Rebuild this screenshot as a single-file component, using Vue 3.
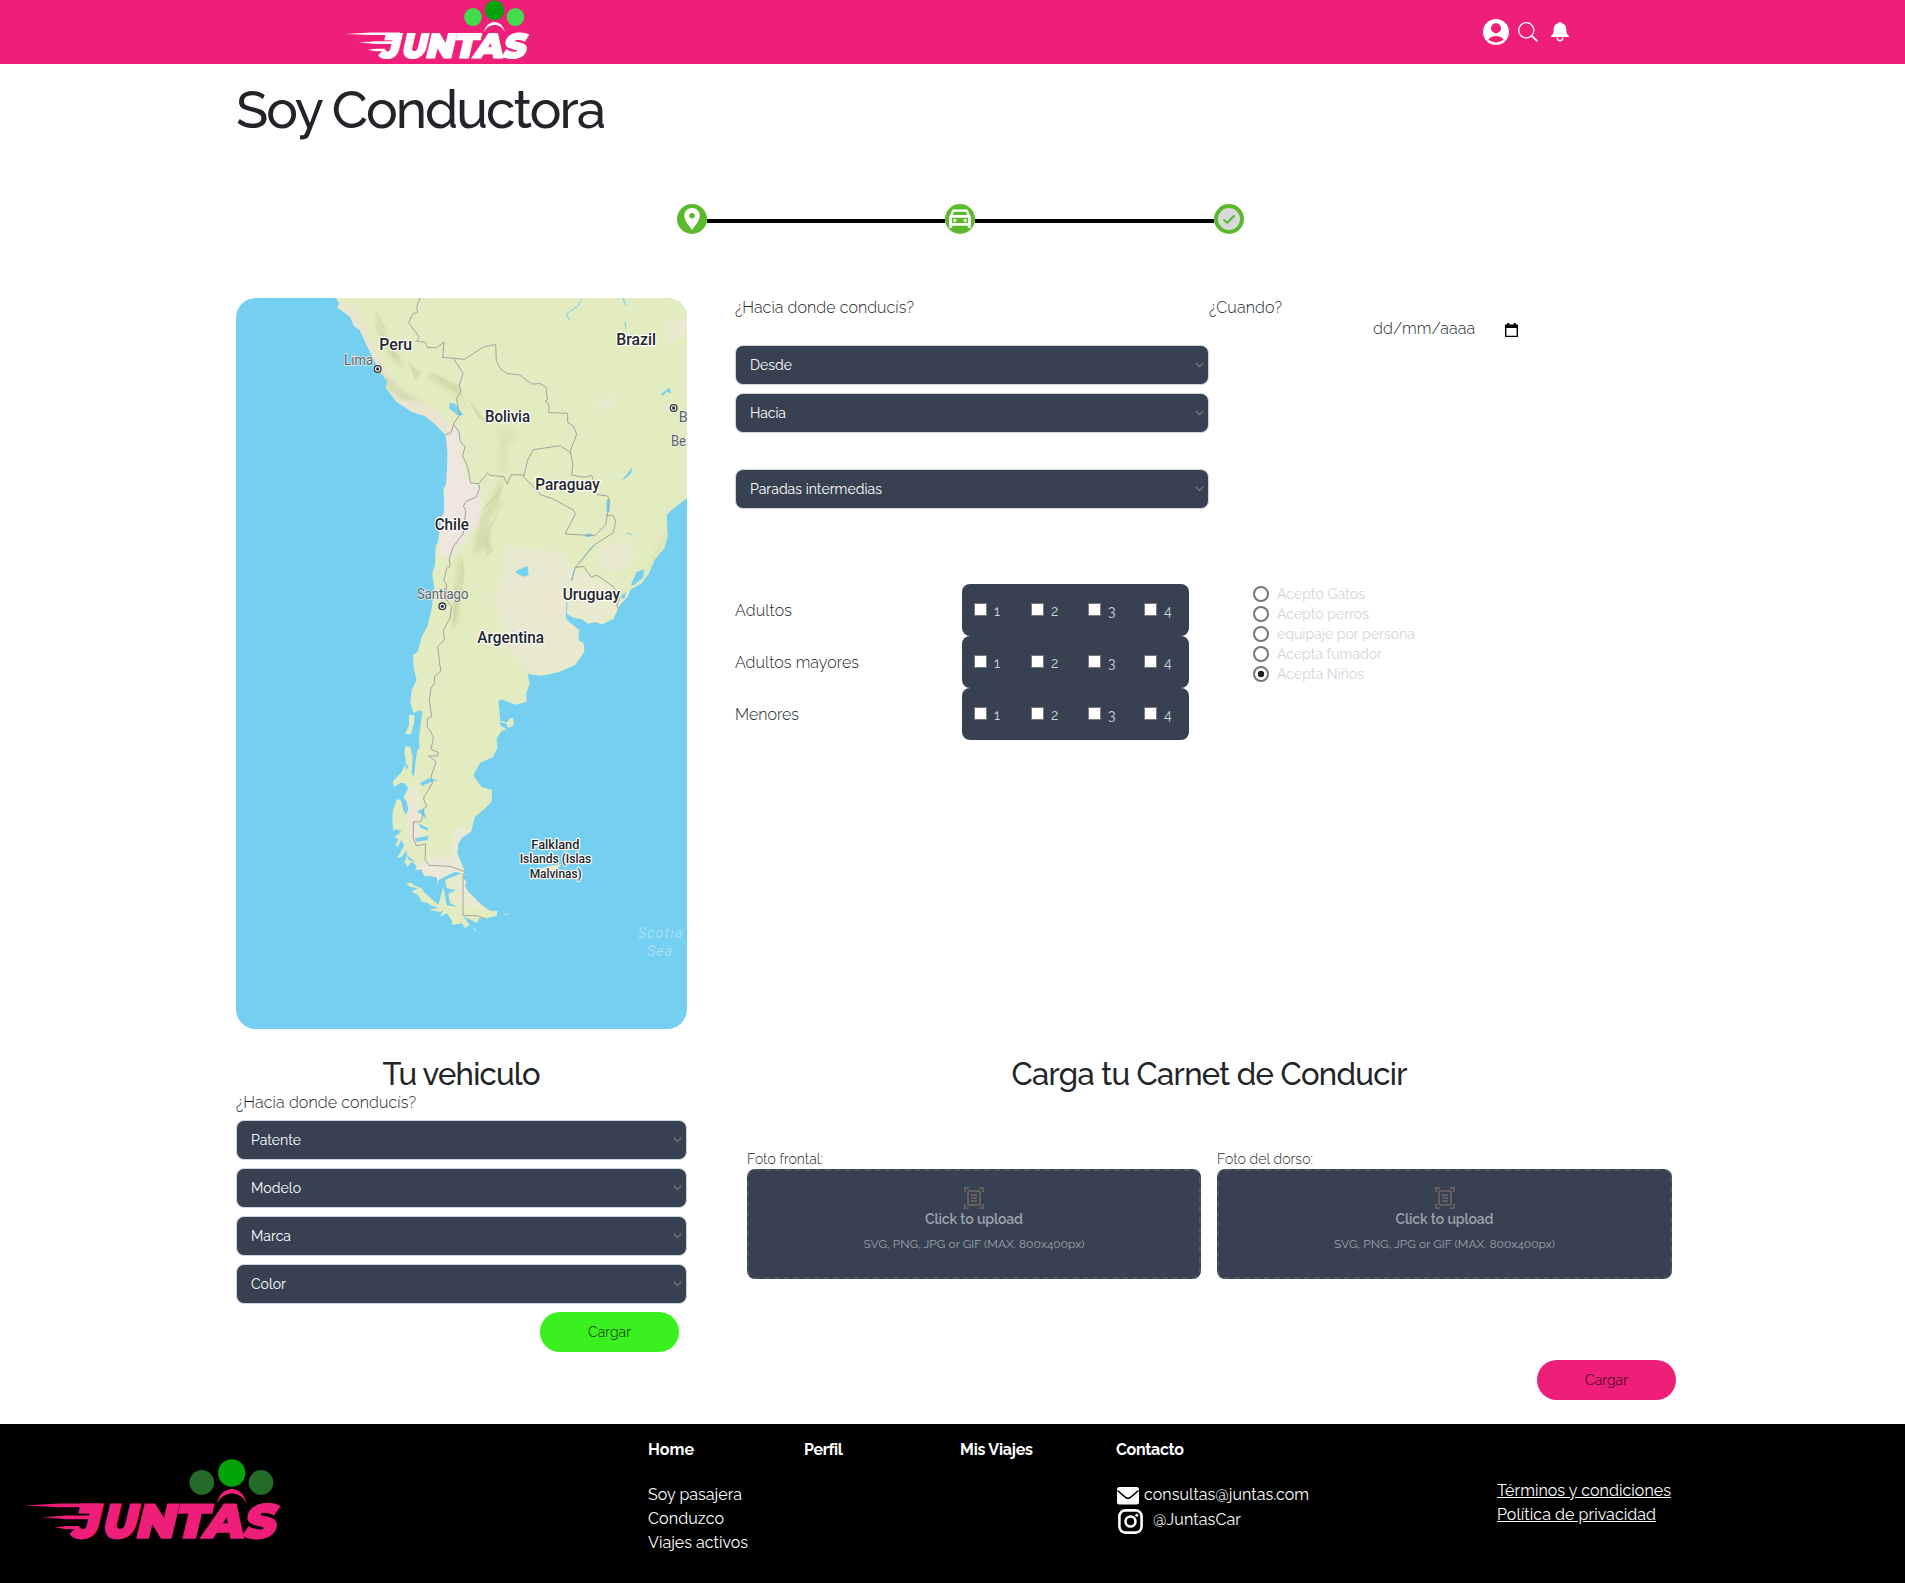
<script setup>
import { h } from 'vue'

// Adjusts tracking so a label keeps its design width.
const vFit = {
  mounted(el, { value }) {
    const natural = el.getBoundingClientRect().width
    const gaps = el.textContent.trim().length - 1
    const step = (value - natural) / gaps
    el.style.letterSpacing = step + 'px'
    el.style.marginRight = -step + 'px'
  },
}

const letters = [
  ['J', 213, 81], ['U', 302, 104], ['N', 404, 119], ['T', 519, 101], ['A', 606, 123], ['S', 727, 97],
]

const Logo = (props) =>
  h('svg', { viewBox: '70 118 772 242', preserveAspectRatio: 'none' }, [
    h('circle', { cx: 607, cy: 188, r: 37, fill: props.side }),
    h('circle', { cx: 785, cy: 188, r: 37, fill: props.side }),
    h('circle', { cx: 697, cy: 160, r: 41, fill: '#05a30b' }),
    h('path', { d: 'M653 250C664 194 730 194 741 250C722 211 674 211 653 250Z', fill: props.ink }),
    h('path', { d: 'M72 257L180 251H300V262H180ZM127 292L200 287H275V298H200ZM166 322L200 318H238V328H200Z', fill: props.ink }),
    ...letters.map(([c, x, w]) =>
      h('text', {
        transform: `translate(${x} 354) skewX(-13.5)`, textLength: w, lengthAdjust: 'spacingAndGlyphs',
        fill: props.ink, stroke: props.ink, 'stroke-width': 4, 'font-family': 'Montserrat, Raleway, sans-serif',
        'font-weight': 900, 'font-size': 144,
      }, c)),
  ])
Logo.props = ['ink', 'side']

const routes = [['Desde', 42], ['Hacia', 36], ['Paradas intermedias', 132]]
const vehicle = [['Patente', 50], ['Modelo', 50], ['Marca', 40], ['Color', 35]]
const passengers = [['Adultos', 57], ['Adultos mayores', 124], ['Menores', 64]]
const options = [
  ['Acepto Gatos', 88], ['Acepto perros', 92], ['equipaje por persona', 138],
  ['Acepta fumador', 105], ['Acepta Niños', 87],
]
const uploads = [['Foto frontal:', 76], ['Foto del dorso:', 96]]
const countries = [
  ['Peru', 463, 181, 98], ['Brazil', 1174, 165, 119], ['Bolivia', 780, 397, 135],
  ['Paraguay', 931, 600, 193], ['Chile', 629, 719, 103], ['Uruguay', 1013, 930, 172],
  ['Argentina', 757, 1058, 200],
]
</script>

<template>
  <div class="page">
    <header class="topbar">
      <Logo class="top-logo" ink="#fff" side="#44dc4c" />
      <nav class="actions">
        <svg width="26" height="26" viewBox="0 0 26 26"><circle cx="13" cy="13" r="13" fill="#fff" /><circle cx="13" cy="9.2" r="5" fill="#ee1e79" /><path d="M5.4 20.6C8.5 15.7 17.5 15.7 20.6 20.6C16.5 24.3 9.5 24.3 5.4 20.6Z" fill="#ee1e79" /></svg>
        <svg width="20" height="20" viewBox="0 0 20 20" fill="none" stroke="#fff" stroke-width="1.3"><circle cx="8.3" cy="8.3" r="7.6" /><path d="M13.8 13.8L19.4 19.4" stroke-width="1.8" /></svg>
        <svg width="18" height="20" viewBox="0 0 18 20" fill="#fff"><path d="M9 0C10 0 10.5.6 10.5 1.3C14 2 15.3 4.5 15.3 8C15.3 11.5 16.5 12.5 18 14V15H0V14C1.5 12.5 2.7 11.5 2.7 8C2.7 4.5 4 2 7.5 1.3C7.5.6 8 0 9 0Z" /><path d="M6.2 15.5C6.5 19.8 11.5 19.8 11.8 15.5" fill="none" stroke="#fff" stroke-width="1.4" /></svg>
      </nav>
    </header>

    <main>
      <h1><span v-fit="370">Soy Conductora</span></h1>

      <div class="stepper">
        <svg class="step" viewBox="0 0 30 30"><circle cx="15" cy="15" r="15" fill="#5bba2b" /><path d="M15 4C10.5 4 7.3 7.3 7.3 11.6C7.3 16.5 11 20.5 15 26C19 20.5 22.7 16.5 22.7 11.6C22.7 7.3 19.5 4 15 4Z" fill="#fff" /><circle cx="15" cy="11.7" r="2.7" fill="#5bba2b" /></svg>
        <i class="track first"></i>
        <svg class="step" viewBox="0 0 30 30"><circle cx="15" cy="15" r="15" fill="#5bba2b" /><path d="M7.5 5.5H22.5L25.8 13V24H22.8V21.7H7.2V24H4.2V13Z" fill="#fff" /><path d="M9 7.8H21L22.3 11H7.7ZM7 13.700H23V19H7Z" fill="#5bba2b" /><circle cx="9.7" cy="16.4" r="1.7" fill="#fff" /><circle cx="20.3" cy="16.4" r="1.7" fill="#fff" /></svg>
        <i class="track"></i>
        <svg class="step" viewBox="0 0 30 30"><circle cx="15" cy="15" r="15" fill="#5bba2b" /><circle cx="15" cy="15" r="11" fill="#d9d9d9" /><path d="M9.5 15.5L13.2 18.8L20.5 11.5" fill="none" stroke="#5bba2b" stroke-width="2" /></svg>
      </div>

      <section class="trip">
        <svg class="map" viewBox="33 24 1353 2193">
          <defs>
            <clipPath id="land">
              <path d="M332 24L343 40L336 52L375 80L387 108L404 120L425 165L445 205L462 240L487 275L482 294L515 335L560 365L600 378L630 402L662 435L668 490L664 580L656 600L658 665L645 690L640 755L632 768L630 825L622 850L628 900L618 965L607 1010L590 1040L578 1085L564 1095L566 1135L575 1170L560 1200L556 1240L566 1270L583 1260L592 1270L580 1325L584 1375L572 1385L570 1435L566 1460L560 1450L563 1400L556 1370L542 1368L538 1390L543 1410L538 1430L530 1445L503 1475L508 1490L528 1478L538 1480L550 1495L535 1522L545 1535L550 1560L540 1575L534 1545L526 1530L515 1528L512 1540L504 1560L502 1590L505 1622L515 1617L530 1625L508 1640L520 1648L512 1665L518 1672L528 1650L538 1665L525 1690L515 1705L530 1700L545 1680L545 1700L538 1715L548 1730L560 1715L575 1728L570 1740L590 1738L598 1760L610 1758L635 1762L642 1800L638 1822L615 1818L600 1808L590 1795L565 1785L560 1778L545 1780L532 1770L555 1790L578 1795L560 1805L580 1815L590 1835L608 1838L615 1845L640 1853L612 1860L645 1866L655 1860L645 1880L665 1870L680 1890L682 1905L712 1900L718 1915L735 1905L715 1880L740 1890L755 1900L762 1885L785 1885L815 1877L818 1862L795 1862L770 1845L750 1825L732 1808L720 1790L724 1775L715 1765L720 1745L697 1690L700 1660L712 1642L738 1625L750 1580L775 1560L800 1535L801 1500L770 1492L745 1456L765 1418L803 1402L817 1375L815 1345L830 1322L845 1318L826 1306L824 1290L845 1298L855 1285L865 1285L866 1306L850 1314L845 1302L826 1295L820 1232L830 1228L870 1244L905 1235L904 1210L914 1180L908 1152L950 1157L1000 1147L1050 1125L1078 1085L1076 1060L1060 1050L1063 1020L1024 990L1025 970L1045 983L1070 987L1090 1001L1110 996L1132 1003L1165 988L1184 945L1205 925L1218 898L1250 880L1272 850L1290 808L1318 775L1328 738L1325 675L1340 660L1386 624V24Z" />
            </clipPath>
            <filter id="soft"><feGaussianBlur stdDeviation="7" /></filter>
          </defs>
          <rect x="33" y="24" width="1353" height="2193" fill="#75cff0" />
          <g clip-path="url(#land)">
            <rect x="33" y="24" width="1353" height="2193" fill="#e3ecc0" />
            <g filter="url(#soft)">
              <path d="M325 24L400 60L450 180L520 290L620 350L690 410L660 450L540 370L450 250L350 60Z" fill="#e9e4d0" />
              <path d="M482 285L540 355L670 440L700 400L720 560L770 590L765 700L700 770L690 800L640 800L650 430L520 355Z" fill="#efe6df" />
              <path d="M850 770L1020 790L1050 850L1020 930L1050 1020L1080 1080L1040 1130L930 1160L850 1080L810 930Z" fill="#e9e9d2" />
              <path d="M1120 770L1210 750L1230 810L1160 850L1120 820ZM1050 840L1160 880L1190 950L1130 1000L1020 980ZM1320 100L1390 80V130L1330 160ZM1120 330L1170 320L1160 350L1110 360Z" fill="#e9ead0" />
              <path d="M690 1610L740 1620L700 1680L720 1790L790 1860L700 1840L570 1730L620 1700L680 1700ZM550 1480L580 1480L590 1660L550 1650Z" fill="#ebe9d6" />
              <path d="M552 1550L575 1550L570 1660L550 1640Z" fill="#eee3df" />
              <path d="M450 50L475 125L520 190L540 240L495 200L455 120ZM610 245L690 290L740 370L700 320L620 270ZM830 560L820 650L760 730L800 690L790 770L740 800L760 700L800 620ZM700 780L715 850L700 1000L680 1010L690 900ZM375 120L440 220L530 300L600 340L520 325L430 240Z" fill="#d2dba9" opacity=".85" />
              <path d="M1380 640L1310 780L1240 880L1310 740ZM800 420L870 415L875 450L850 470L850 550L820 550L825 450Z" fill="#d9e1b4" opacity=".7" />
            </g>
            <path d="M450 65L487 120L470 112ZM490 160L525 210L505 205ZM550 215L590 250L570 270ZM620 248L700 285L720 330ZM725 320L790 400L760 385ZM835 570L830 610L770 665L785 640L815 615ZM840 625L805 700L780 735L800 700ZM780 730L805 780L785 800ZM710 790L718 850L708 920ZM690 880L700 960L682 1020Z" fill="#cbd3a2" opacity=".55" />
          </g>
          <path fill="#e6ebc7" d="M552 1274L568 1276L568 1295L558 1333L541 1332L552 1305ZM532 1874L550 1876ZM664 1760L710 1750L695 1800L720 1805L700 1830L668 1815ZM745 1912L760 1930L748 1920ZM835 1874L858 1868L842 1876ZM945 1735L975 1728L1010 1722L985 1745L955 1745Z" />
          <path fill="#75cff0" d="M570 1275L592 1262L580 1360L567 1440ZM540 1415L550 1430L543 1440ZM528 1530L545 1570L535 1560ZM580 1600L610 1615L608 1622L585 1612ZM570 1645L610 1638L608 1650L575 1655ZM575 1565L595 1555L605 1590L594 1575ZM585 1480L610 1465L638 1470L620 1475L590 1488ZM545 1695L570 1715L552 1710ZM640 1770L690 1745L710 1750L660 1770L665 1795L692 1800L670 1812L675 1840L700 1852L665 1845L655 1790L640 1845L590 1800L636 1820ZM560 1760L625 1758L600 1770L628 1770L600 1785ZM675 338L690 342L715 375L700 377L672 355ZM873 842L908 828L911 855L893 860L873 848ZM1217 885L1235 845L1257 838L1255 862L1228 885ZM1185 920L1203 905L1198 928ZM1190 570L1208 550L1222 530L1218 550L1200 566ZM1075 738L1090 730L1105 733L1092 742ZM1145 628H1154V665H1144ZM1308 312L1333 293L1340 310L1325 305L1312 318ZM638 695L650 704L640 708Z" />
          <path fill="none" stroke="#75cff0" stroke-width="3" d="M1070 28L1058 48L1024 72L1034 92M1193 24L1204 48M1200 96L1202 115M1050 835L1040 870M1026 935L1023 985M1105 765L1060 822M1205 730L1223 734" />
          <g fill="none" stroke="#a3a39f" stroke-width="3">
            <path d="M585 24L575 50L578 65L562 74L551 98L583 142L574 154L601 157L607 173H635L657 155L653 202L718 208L775 171L812 163L814 212L825 235L845 250L884 255L920 282L945 281L963 291L967 330L960 334L972 343V368L1028 370V397L1045 408L1055 433L1035 485L1044 522L1040 555L1078 562L1100 556L1117 614L1148 618L1154 635L1142 705L1109 737L1020 732L1051 672L1045 660L980 625L948 615L896 560L908 510L925 479L1005 467L1040 490" />
            <path d="M685 204L714 250L703 285L708 305L694 325L704 375L685 402L702 425L706 455L720 470L713 498L728 530L737 579L761 581L788 549L795 556L836 560L847 582L858 554L896 555M662 434L678 428L685 404M761 581L764 595L753 622L725 633L715 648L722 662L715 730L685 770L673 805L675 830L665 835L656 872L665 885L662 925L680 950L675 985L655 1020L658 1050L638 1070L647 1143L629 1158L628 1180L618 1195L613 1230L620 1280L607 1287V1312L618 1325L625 1345L618 1378L640 1387L636 1398H611L633 1415L618 1460L622 1480L595 1525L605 1550L595 1557L590 1592L580 1596H565V1645L575 1668L602 1662L600 1710L612 1726L675 1729L720 1745L714 1755V1877H755L782 1886M1142 677H1165L1172 695L1165 728L1108 765L1050 833L1040 872M1050 833L1075 829L1100 862L1115 855L1165 890L1185 925L1175 945L1182 960" />
          </g>
          <g font-family="Roboto, sans-serif" font-weight="500" font-size="48" fill="#22252b" stroke="#fff" stroke-width="7" stroke-linejoin="round" paint-order="stroke">
            <text v-for="c in countries" :key="c[0]" :x="c[1]" :y="c[2]" :textLength="c[3]" lengthAdjust="spacingAndGlyphs">{{ c[0] }}</text>
            <g font-size="38">
              <text x="919" y="1678" textLength="144" lengthAdjust="spacingAndGlyphs">Falkland</text>
              <text x="884" y="1720" textLength="215" lengthAdjust="spacingAndGlyphs">Islands (Islas</text>
              <text x="914" y="1763" textLength="156" lengthAdjust="spacingAndGlyphs">Malvinas)</text>
            </g>
          </g>
          <g font-family="Roboto, sans-serif" font-size="43" fill="#5b626a" stroke="#f4f4ee" stroke-width="4" paint-order="stroke">
            <text x="357" y="225" textLength="88" lengthAdjust="spacingAndGlyphs">Lima</text>
            <text x="576" y="928" textLength="154" lengthAdjust="spacingAndGlyphs">Santiago</text>
            <text x="1361" y="396">B</text>
            <text x="1338" y="468" textLength="45" lengthAdjust="spacingAndGlyphs">Be</text>
          </g>
          <g font-family="Roboto, sans-serif" font-size="43" font-style="italic" fill="#a6def5">
            <text x="1238" y="1944" textLength="134">Scotia</text>
            <text x="1266" y="1998" textLength="76">Sea</text>
          </g>
          <g v-for="p in [[458, 237], [652, 949], [1346, 354]]" :key="p[0]" :transform="`translate(${p[0]} ${p[1]})`">
            <circle r="13" fill="#fff" /><circle r="10" fill="none" stroke="#30343a" stroke-width="4" /><circle r="5" fill="#30343a" />
          </g>
        </svg>

        <div class="route">
          <p><span v-fit="179">¿Hacia donde conducís?</span></p>
          <div class="selects">
            <div v-for="r in routes" :key="r[0]" class="select">
              <span v-fit="r[1]">{{ r[0] }}</span>
              <svg width="9" height="6" viewBox="0 0 9 6"><path d="M.8 .8L4.5 4.5L8.2 .8" /></svg>
            </div>
          </div>
          <div class="seats">
            <div v-for="p in passengers" :key="p[0]" class="seat-row">
              <span class="seat-name"><span v-fit="p[1]">{{ p[0] }}</span></span>
              <div class="seat-box">
                <label v-for="n in 4" :key="n"><i class="check"></i><span class="num">{{ n }}</span></label>
              </div>
            </div>
          </div>
        </div>

        <div class="when">
          <p><span v-fit="73">¿Cuando?</span></p>
          <div class="date">
            <span v-fit="102">dd/mm/aaaa</span>
            <svg width="13" height="14" viewBox="0 0 12 14" preserveAspectRatio="none"><path d="M2 0H4V1.5H8V0H10V1.5H12V14H0V1.5H2ZM1.3 5V12.7H10.7V5Z" fill="#000" fill-rule="evenodd" /></svg>
          </div>
          <ul>
            <li v-for="(o, i) in options" :key="o[0]"><i class="radio" :class="{ on: i === 4 }"></i><span v-fit="o[1]">{{ o[0] }}</span></li>
          </ul>
        </div>
      </section>

      <section class="bottom">
        <div class="vehicle">
          <h2><span v-fit="158">Tu vehiculo</span></h2>
          <p><span v-fit="180">¿Hacia donde conducís?</span></p>
          <div v-for="r in vehicle" :key="r[0]" class="select">
            <span v-fit="r[1]">{{ r[0] }}</span>
            <svg width="9" height="6" viewBox="0 0 9 6"><path d="M.8 .8L4.5 4.5L8.2 .8" /></svg>
          </div>
          <button class="green"><span v-fit="43">Cargar</span></button>
        </div>
        <div class="licence">
          <h2><span v-fit="396">Carga tu Carnet de Conducir</span></h2>
          <div class="uploads">
            <div v-for="u in uploads" :key="u[0]" class="upload">
              <p><span v-fit="u[1]">{{ u[0] }}</span></p>
              <div class="drop">
                <svg width="20" height="22" viewBox="0 0 20 22" fill="none" stroke="#635f5f" stroke-width="2"><path d="M1 5V1H5M15 1H19V5M19 17V21H15M5 21H1V17M7 8H13M7 11H13M7 14H13" /><rect x="4" y="4" width="12" height="14" rx="1" /></svg>
                <b><span v-fit="98">Click to upload</span></b>
                <small><span v-fit="221">SVG, PNG, JPG or GIF (MAX. 800x400px)</span></small>
              </div>
            </div>
          </div>
          <button class="pink"><span v-fit="43">Cargar</span></button>
        </div>
      </section>
    </main>

    <footer>
      <Logo class="foot-logo" ink="#ee1e79" side="#246b27" />
      <div class="col">
        <h3><span v-fit="46">Home</span></h3>
        <a><span v-fit="94">Soy pasajera</span></a>
        <a><span v-fit="76">Conduzco</span></a>
        <a><span v-fit="100">Viajes activos</span></a>
      </div>
      <div class="col"><h3><span v-fit="38">Perfil</span></h3></div>
      <div class="col"><h3><span v-fit="73">Mis Viajes</span></h3></div>
      <div class="col contact">
        <h3><span v-fit="68">Contacto</span></h3>
        <a class="mail"><svg width="22" height="18" viewBox="0 0 22 18"><rect width="22" height="17.5" rx="2.5" fill="#fff" /><path d="M.5 3.5L8.5 10.3C10 11.5 12 11.5 13.5 10.3L21.5 3.5" fill="none" stroke="#000" stroke-width="1.5" /></svg><span v-fit="165">consultas@juntas.com</span></a>
        <a class="insta"><svg width="25" height="25" viewBox="0 0 25 25" fill="none" stroke="#fff" stroke-width="2.6"><rect x="1.4" y="1.4" width="22.2" height="22.2" rx="6" /><circle cx="12.5" cy="12.5" r="5" /><circle cx="18.8" cy="6.3" r="1.5" fill="#fff" stroke="none" /></svg><span v-fit="88">@JuntasCar</span></a>
      </div>
      <div class="legal">
        <a><span v-fit="174">Términos y condiciones</span></a>
        <a><span v-fit="159">Política de privacidad</span></a>
      </div>
    </footer>
  </div>
</template>

<style>
body { margin: 0; background: #fff; }
</style>

<style scoped>
.page { width: 1905px; height: 1583px; overflow: hidden; font: 400 16px/24px Raleway, Lato, sans-serif; color: #212529; display: flex; flex-direction: column; }
.page * { box-sizing: border-box; }
span { display: inline-block; white-space: nowrap; }
h1, h2, h3, p, ul { margin: 0; padding: 0; }
p { color: #212529; font-weight: 350; }
.topbar { height: 64px; flex: none; background: #ee1e79; display: flex; align-items: flex-start; padding-left: 345px; }
.top-logo { width: 184px; height: 59px; flex: none; }
.actions { display: flex; align-items: center; margin: 19px 0 0 954px; height: 26px; }
.actions svg + svg { margin-left: 9px; }
.actions svg + svg + svg { margin-left: 13px; }
main { padding-left: 236px; height: 1360px; flex: none; display: flex; flex-direction: column; }
h1 { font-size: 53px; line-height: 66px; font-weight: 500; margin-top: 12px; height: 66px; }
.stepper { display: flex; align-items: center; width: 567px; height: 30px; margin: 62px 0 0 441px; }
.step { width: 30px; height: 30px; flex: none; }
.track { flex: 1; height: 4px; background: #000; margin-top: 4px; }
.track.first { flex: none; width: 238px; }
.trip { display: flex; margin-top: 62px; height: 733px; flex: none; }
.map { width: 451px; height: 731px; border-radius: 20px; margin-top: 2px; flex: none; display: block; }
.route { width: 474px; margin-left: 48px; }
.selects { margin-top: 25px; }
.select { height: 40px; border: 1px solid #d1d5db; border-radius: 8px; background: #374151; color: #fff; font-size: 14px; display: flex; flex: none; align-items: center; justify-content: space-between; padding: 0 4px 0 14px; margin-bottom: 8px; }
.select svg { fill: none; stroke: #777; stroke-width: 1.3; }
.selects .select:last-child { margin-top: 36px; }
.seats { margin-top: 75px; }
.seat-row { display: flex; height: 52px; align-items: center; }
.seat-name { width: 227px; padding-top: 2px; font-weight: 350; }
.seat-box { width: 227px; height: 52px; background: #374151; border-radius: 8px; display: grid; grid-template-columns: 57px 57px 56px 45px; padding-left: 12px; align-items: center; }
label { display: flex; height: 14px; align-items: flex-start; }
.check { width: 13px; height: 13px; background: #fff; border: 1px solid #767676; flex: none; }
.num { margin: -1px 0 0 7px; color: #d1d5db; font-size: 14px; line-height: 18px; }
.when { width: 300px; }
.date { display: flex; align-items: center; margin: -3px 0 0 164px; height: 24px; font-weight: 350; }
.date svg { margin-left: 30px; margin-top: 2px; flex: none; }
ul { list-style: none; margin: 243px 0 0 44px; }
li { height: 20px; display: flex; align-items: center; color: #d1d5db; font-size: 14px; line-height: 20px; }
.radio { width: 16px; height: 16px; border: 2px solid #767676; border-radius: 50%; margin: 0 8px 0 0; }
.radio.on { background: radial-gradient(circle, #222 3px, #fff 3.6px); }
.bottom { display: flex; margin-top: 26px; }
.vehicle { width: 451px; display: flex; flex-direction: column; }
h2 { font-size: 31px; line-height: 38px; height: 36px; font-weight: 500; text-align: center; }
.vehicle p { margin-bottom: 5px; }
button { border: 0; width: 139px; height: 40px; border-radius: 20px; font: 350 14px/20px Raleway, Lato, sans-serif; align-self: flex-end; padding: 0; }
.green { background: #3bf01f; margin-right: 8px; color: #0b2a07; }
.pink { background: #ee1e79; margin-top: 81px; color: #1d0410; margin-right: -4px; }
.licence { width: 925px; margin-left: 60px; display: flex; flex-direction: column; }
.uploads { display: flex; gap: 16px; margin-top: 58px; }
.upload { flex: none; width: 454px; }
.upload:last-child { width: 455px; }
.upload p { font-size: 14px; line-height: 20px; }
.drop { height: 110px; border: 2px dashed #4b5563; border-radius: 8px; background: #374151; color: #9ca3af; display: flex; flex-direction: column; align-items: center; padding-top: 16px; }
.drop b { font-size: 14px; line-height: 20px; font-weight: 600; }
.drop small { font-size: 12px; line-height: 16px; margin-top: 7px; }
footer { background: #000; color: #fff; height: 159px; flex: none; display: flex; align-items: flex-start; }
.foot-logo { width: 257px; height: 81px; margin: 35px 368px 0 23px; flex: none; }
.col { width: 156px; padding-top: 14px; flex: none; display: flex; flex-direction: column; }
h3 { font-size: 16px; line-height: 24px; font-weight: 700; margin-bottom: 21px; }
.contact { width: 381px; }
.mail, .insta { display: flex; align-items: center; height: 24px; }
.mail svg { margin: 2px 5px 0 1px; }
.insta { height: 26px; }
.insta svg { margin: 3px 10px 0 2px; flex: none; }
.legal { padding-top: 55px; display: flex; flex-direction: column; }
.legal span { text-decoration: underline; }
</style>
